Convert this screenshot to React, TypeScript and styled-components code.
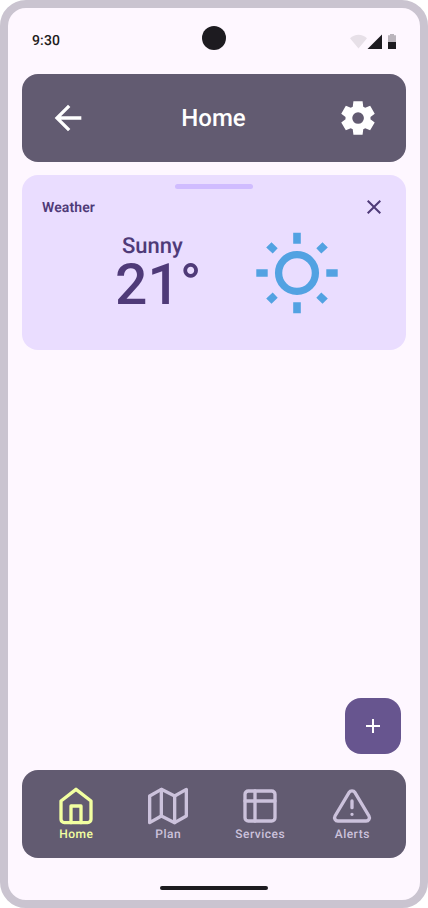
import React from "react";
import styled, { createGlobalStyle } from "styled-components";

const Global = createGlobalStyle`
  * { box-sizing: border-box; }
  body {
    margin: 0;
    background: #fff;
    font-family: Roboto, sans-serif;
    text-rendering: geometricPrecision;
  }
  svg { display: block; }
`;

const Phone = styled.div`
  width: 428px;
  height: 908px;
  border: 8px solid #cac4d0;
  border-radius: 26px;
  background: #fef7ff;
  display: flex;
  flex-direction: column;
  overflow: hidden;
`;

const StatusBar = styled.header`
  height: 66px;
  flex: none;
  display: grid;
  grid-template-columns: 1fr 24px 1fr;
  align-items: center;
  padding: 0 24px 6px;
`;

const Clock = styled.span`
  font-size: 14px;
  font-weight: 500;
  line-height: 20px;
  letter-spacing: 0.14px;
  color: #1d1b20;
  margin-top: 6px;
`;

const Camera = styled.div`
  width: 24px;
  height: 24px;
  border-radius: 50%;
  background: #1d1b20;
`;

const Signals = styled.div`
  justify-self: end;
  margin-top: 8px;
`;

const TopBar = styled.div`
  flex: none;
  height: 88px;
  margin: 0 14px;
  padding: 0 28px 0 26px;
  border-radius: 16px;
  background: #625b71;
  color: #fff;
  display: flex;
  align-items: center;
  justify-content: space-between;
`;

const Title = styled.h1`
  margin: 0;
  padding-left: 1px;
  font-size: 24px;
  font-weight: 500;
  line-height: 32px;
`;

const Card = styled.section`
  flex: none;
  height: 175px;
  margin: 13px 14px 0;
  padding: 9px 20px 0;
  border-radius: 16px;
  background: #eaddff;
  color: #4f3a78;
  display: flex;
  flex-direction: column;
`;

const Grip = styled.div`
  width: 78px;
  height: 5px;
  border-radius: 3px;
  background: #d0bcff;
  align-self: center;
`;

const CardHead = styled.div`
  height: 24px;
  margin-top: 6px;
  display: flex;
  align-items: center;
  justify-content: space-between;
`;

const CardTitle = styled.h2`
  margin: 0;
  padding-top: 2px;
  font-size: 14px;
  font-weight: 600;
  line-height: 20px;
  letter-spacing: 0.1px;
`;

const Weather = styled.div`
  display: flex;
  justify-content: space-between;
  padding: 13px 47px 0 73px;
`;

const Reading = styled.div`
  display: flex;
  flex-direction: column;
`;

const Condition = styled.span`
  font-size: 22px;
  font-weight: 500;
  line-height: 30px;
  padding-left: 7px;
`;

const Temperature = styled.span`
  font-size: 57px;
  font-weight: 500;
  line-height: 46px;
`;

const Spacer = styled.div`
  flex: 1;
`;

const Fab = styled.button`
  align-self: flex-end;
  flex: none;
  width: 56px;
  height: 56px;
  margin: 0 19px 16px;
  padding: 0;
  border: 0;
  border-radius: 16px;
  background: #67558f;
  color: #fff;
  display: grid;
  place-items: center;
`;

const NavBar = styled.nav`
  flex: none;
  height: 88px;
  margin: 0 14px;
  padding: 16px 8px 0;
  border-radius: 16px;
  background: #625b71;
  display: grid;
  grid-template-columns: repeat(4, 92px);
`;

const NavItem = styled.a<{ $active?: boolean }>`
  display: flex;
  flex-direction: column;
  align-items: center;
  color: ${(p) => (p.$active ? "#f2ffa1" : "#ccc2dc")};
  font-size: 12px;
  font-weight: 500;
  line-height: 16px;
  letter-spacing: 0.5px;
  text-indent: 0.5px;
`;

const GestureArea = styled.footer`
  flex: none;
  height: 42px;
  display: flex;
  justify-content: center;
  align-items: flex-end;
  padding-bottom: 10px;
`;

const GestureHandle = styled.div`
  width: 108px;
  height: 4px;
  border-radius: 2px;
  background: #1d1b20;
`;

const Stroked = styled.svg.attrs({
  width: 40,
  height: 40,
  viewBox: "0 0 24 24",
  fill: "none",
  stroke: "currentColor",
  strokeWidth: 2,
  strokeLinecap: "round",
  strokeLinejoin: "round",
})``;

const navItems = [
  {
    label: "Home",
    active: true,
    shape: (
      <>
        <path d="M3 9l9-7 9 7v11a2 2 0 0 1-2 2H5a2 2 0 0 1-2-2z" />
        <path d="M9 22V12h6v10" />
      </>
    ),
  },
  {
    label: "Plan",
    shape: (
      <>
        <path d="M1 6v16l7-4 8 4 7-4V2l-7 4-8-4-7 4z" />
        <path d="M8 2v16M16 6v16" />
      </>
    ),
  },
  {
    label: "Services",
    shape: (
      <>
        <rect x="3" y="3" width="18" height="18" rx="2" />
        <path d="M3 9h18M9 3v18" />
      </>
    ),
  },
  {
    label: "Alerts",
    shape: (
      <>
        <path d="M10.29 3.86L1.82 18a2 2 0 0 0 1.71 3h16.94a2 2 0 0 0 1.71-3L13.71 3.86a2 2 0 0 0-3.42 0z" />
        <path d="M12 9v4M12 17h.01" />
      </>
    ),
  },
];

export default function App() {
  return (
    <>
      <Global />
      <Phone>
        <StatusBar>
          <Clock>9:30</Clock>
          <Camera />
          <Signals>
            <svg width="46" height="16" viewBox="0 0 46 16" fill="#1d1b20">
              <path d="M8.5 14.5L0 4.2C2.4 2 5.3.8 8.5.8S14.6 2 17 4.2z" opacity=".1" />
              <path d="M17.5 15L32 .5V15z" />
              <path d="M38 1.2h2V0h4v1.2h2V8h-8z" opacity=".3" />
              <path d="M38 8h8v7h-8z" />
            </svg>
          </Signals>
        </StatusBar>
        <TopBar>
          <svg width="40" height="40" viewBox="0 0 24 24" fill="currentColor">
            <path d="M20 11H7.83l5.59-5.59L12 4l-8 8 8 8 1.41-1.41L7.83 13H20z" />
          </svg>
          <Title>Home</Title>
          <svg width="40" height="40" viewBox="0 -960 960 960" fill="currentColor">
            <path d="m370-80-16-128q-13-5-24.5-12T307-235l-119 50L78-375l103-78q-1-7-1-13.5v-27q0-6.5 1-13.5L78-585l110-190 119 50q11-8 23-15t24-12l16-128h220l16 128q13 5 24.5 12t22.5 15l119-50 110 190-103 78q1 7 1 13.5v27q0 6.5-2 13.5l103 78-110 190-118-50q-11 8-23 15t-24 12L590-80H370Zm112-260q58 0 99-41t41-99q0-58-41-99t-99-41q-59 0-99.5 41T342-480q0 58 40.5 99t99.5 41Z" />
          </svg>
        </TopBar>
        <Card>
          <Grip />
          <CardHead>
            <CardTitle>Weather</CardTitle>
            <svg width="24" height="24" viewBox="0 0 24 24" fill="currentColor">
              <path d="M19 6.41L17.59 5 12 10.59 6.41 5 5 6.41 10.59 12 5 17.59 6.41 19 12 13.41 17.59 19 19 17.59 13.41 12z" />
            </svg>
          </CardHead>
          <Weather>
            <Reading>
              <Condition>Sunny</Condition>
              <Temperature>21°</Temperature>
            </Reading>
            <svg width="84" height="82" viewBox="-42 -41 84 82" fill="#52a2e2">
              <circle r="18.4" fill="none" stroke="#52a2e2" strokeWidth="7.3" />
              <path d="M-3.8-40.2h7.6v11h-7.6zM-3.8 29.2h7.6v11h-7.6zM-40.7-3.8h11.4v7.6h-11.4zM29.3-3.8h11.4v7.6h-11.4z" />
              <path d="M-25.5-30.8l6.2 6.1-5 5.2-6.5-6.1zM25.5-30.8l5.3 5.2-6.5 6.1-5-5.2zM-25.5 30.8l6.2-6.1-5-5.2-6.5 6.1zM25.5 30.8l5.3-5.2-6.5-6.1-5 5.2z" />
            </svg>
          </Weather>
        </Card>
        <Spacer />
        <Fab aria-label="Add">
          <svg width="24" height="24" viewBox="0 0 24 24" fill="currentColor">
            <path d="M19 13h-6v6h-2v-6H5v-2h6V5h2v6h6z" />
          </svg>
        </Fab>
        <NavBar>
          {navItems.map(({ label, active, shape }) => (
            <NavItem key={label} $active={active}>
              <Stroked>{shape}</Stroked>
              {label}
            </NavItem>
          ))}
        </NavBar>
        <GestureArea>
          <GestureHandle />
        </GestureArea>
      </Phone>
    </>
  );
}
